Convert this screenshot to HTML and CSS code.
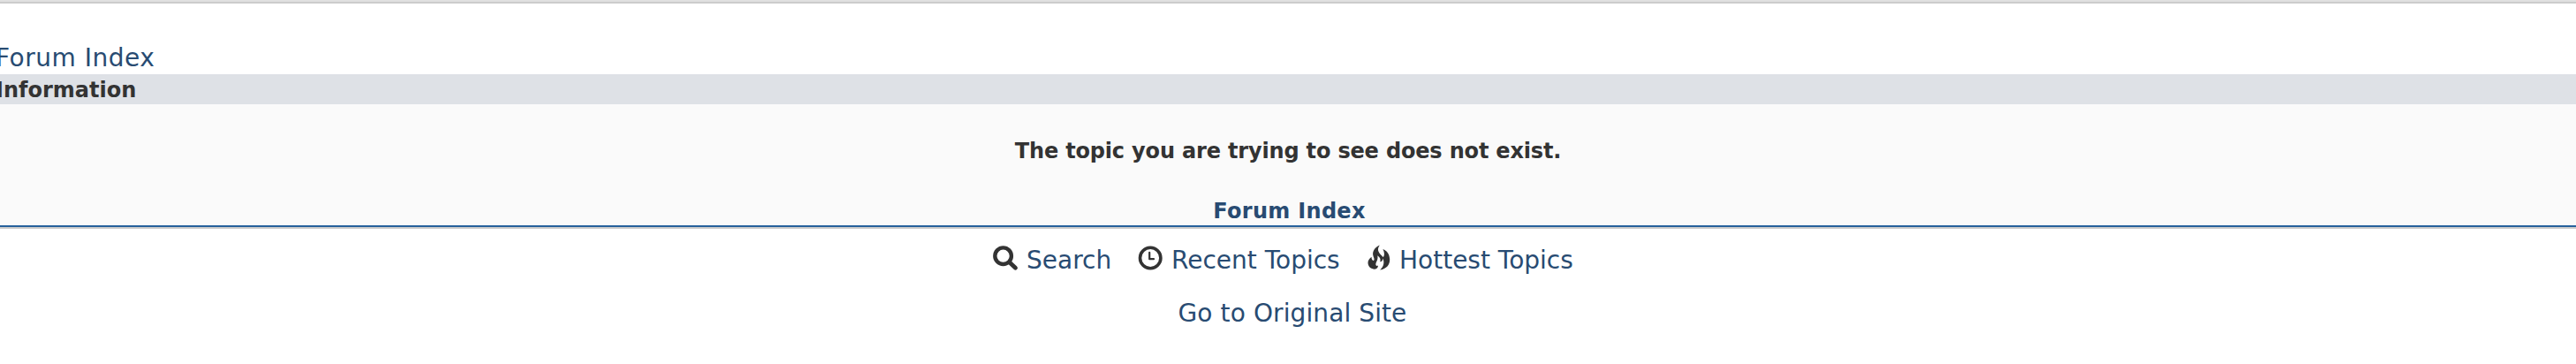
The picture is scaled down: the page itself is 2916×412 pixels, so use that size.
FILE: index.html
```html
<!DOCTYPE html>
<html lang="en">
<head>
    <meta charset="UTF-8">
    <title>Information</title>
    <link rel="stylesheet" href="styles.css">
</head>
<body>
    <div class="topbar"></div>
    <div class="breadcrumb"><a href="#">Forum Index</a></div>
    <div class="box">
        <h2 class="box-title">Information</h2>
        <div class="box-body">
            <p class="message">The topic you are trying to see does not exist.</p>
            <a class="back" href="#">Forum Index</a>
        </div>
    </div>
    <div class="links">
        <div class="item search">
            <svg width="28" height="28" viewBox="0 0 28 28">
                <circle cx="11.6" cy="11.7" r="9.3" fill="none" stroke="#333" stroke-width="4.4"/>
                <path d="M18.6 18.7 L25.5 25.2" stroke="#333" stroke-width="4.8" stroke-linecap="round"/>
            </svg>
            <a href="#">Search</a>
        </div>
        <div class="item recent">
            <svg width="28" height="28" viewBox="0 0 28 28">
                <circle cx="14.2" cy="14" r="11.7" fill="none" stroke="#333" stroke-width="3.6"/>
                <path d="M13.2 7.8 V15.2 H18" fill="none" stroke="#333" stroke-width="2.2" stroke-linecap="round" stroke-linejoin="round"/>
            </svg>
            <a href="#">Recent Topics</a>
        </div>
        <div class="item hottest">
            <svg width="28" height="28" viewBox="0 0 28 28">
                <path d="M13.8 -0.5 C8 2 5.6 6.5 6.2 10.5 C6.5 12.8 8.2 15 7.4 16.5 C6 18 4.2 15.3 4.6 12.8 C2 14.7 0.3 17 0.5 19.8 C0.8 23.8 3.8 26.5 8.2 26.7 C10.2 26.5 12 25 12 22.5 C10.5 23.5 9 22.5 9.4 20.5 C10 18 12.4 15.5 11.2 11.3 C14 13 15.3 15.5 14.2 18.3 C16.2 18.2 17.3 16.8 17.3 14.6 C19.4 18.8 18.4 24.2 14.2 27.5 C21.5 26.5 25.4 21.5 25.2 15.5 C25 9.5 22 5.5 17.4 3.9 C19.2 7.2 19.6 11.5 17.6 13 C15.9 10.8 12.4 8.2 12 4.9 C11.9 3 12.4 1.4 13.8 -0.5 Z" fill="#333"/>
            </svg>
            <a href="#">Hottest Topics</a>
        </div>
    </div>
    <div class="original"><a href="#">Go to Original Site</a></div>
</body>
</html>
```

FILE: styles.css
```css
body {
    margin: 0;
    background: #fff;
    color: #333;
    font-family: Verdana, "DejaVu Sans", sans-serif;
    font-size: 28px;
    line-height: 36px;
    overflow: hidden;
}
a {
    color: #284b72;
    text-decoration: none;
}
.topbar {
    height: 2px;
    background: #e0e0e0;
    border-bottom: 2px solid #ccc;
}
.breadcrumb {
    height: 36px;
    margin-top: 44px;
    margin-left: -5px;
    letter-spacing: 0.5px;
}
.box {
    border-bottom: 2px solid #ccc;
    font-size: 24px;
    font-weight: bold;
}
.box-title {
    margin: 0;
    height: 34px;
    text-indent: -5px;
    font-size: 24px;
    background: #dee1e6;
}
.box-body {
    height: 137px;
    background: #fafafa;
    border-bottom: 2px solid #26619c;
    text-align: center;
}
.message {
    margin: 0;
    padding: 35px 0 32px;
    letter-spacing: -0.17px;
}
.back {
    margin-left: 3px;
    letter-spacing: 0.3px;
}
.links {
    display: flex;
    height: 36px;
    margin-top: 18px;
    padding-left: 1124px;
}
.item {
    display: flex;
    white-space: nowrap;
}
.item svg {
    flex: none;
    margin-right: 10px;
    margin-top: 1px;
    overflow: visible;
}
.search {
    width: 164px;
}
.recent {
    width: 260px;
}
.hottest svg {
    margin-right: 8px;
}
.original {
    margin-top: 24px;
    padding-left: 10px;
    text-align: center;
    letter-spacing: 0.1px;
}
```
